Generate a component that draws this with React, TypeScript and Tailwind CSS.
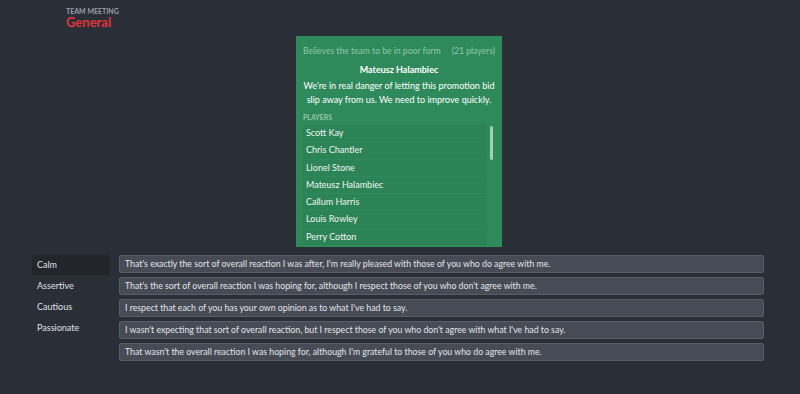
import React from 'react';

const players = [
    'Scott Kay',
    'Chris Chantler',
    'Lionel Stone',
    'Mateusz Halambiec',
    'Callum Harris',
    'Louis Rowley',
    'Perry Cotton',
];

const tones = ['Calm', 'Assertive', 'Cautious', 'Passionate'];

const replies = [
    "That's exactly the sort of overall reaction I was after, I'm really pleased with those of you who do agree with me.",
    "That's the sort of overall reaction I was hoping for, although I respect those of you who don't agree with me.",
    'I respect that each of you has your own opinion as to what I\'ve had to say.',
    "I wasn't expecting that sort of overall reaction, but I respect those of you who don't agree with what I've had to say.",
    "That wasn't the overall reaction I was hoping for, although I'm grateful to those of you who do agree with me.",
];

export default function App() {
    return (
        <div
            className="w-[800px] h-[394px] bg-[#2a2e36] overflow-hidden flex flex-col"
            style={{ fontFamily: 'Lato, "Noto Sans", sans-serif' }}
        >
            {/* 헤더 */}
            <div className="pl-[66px] pt-[7px] h-[36px]">
                <div className="text-[7px] font-bold uppercase text-[#9a9ea6] leading-[8px]">
                    Team Meeting
                </div>
                <div className="text-[13px] font-bold text-[#e0343d] leading-[15px]">General</div>
            </div>

            {/* 선수 반응 패널 */}
            <div className="flex justify-center">
                <div className="w-[206px] h-[211px] bg-[#2e8a5b] ml-[-2px] px-[6px] pt-[9px] flex flex-col overflow-hidden">
                    <div className="flex justify-between text-[8.6px] text-[#92c8a9] leading-[12px] px-[1px] whitespace-nowrap">
                        <span>Believes the team to be in poor form</span>
                        <span>(21 players)</span>
                    </div>
                    <div className="text-center text-[9px] font-bold text-white leading-[12px] mt-[7px]">
                        Mateusz Halambiec
                    </div>
                    <div className="text-center text-[9px] text-white leading-[14px] mt-[3px] whitespace-nowrap">
                        We're in real danger of letting this promotion bid
                        <br />
                        slip away from us. We need to improve quickly.
                    </div>
                    <div className="text-[7px] font-bold uppercase text-[#92c8a9] leading-[8px] mt-[6px] px-[1px]">
                        Players
                    </div>
                    <div className="flex mt-[4px] gap-[3px]">
                        <div className="flex-1 flex flex-col gap-[1px]">
                            {players.map((p) => (
                                <div
                                    key={p}
                                    className="h-[16.3px] bg-[#2c8356] text-[9px] text-[#eef6f1] leading-[16px] pl-[4px] whitespace-nowrap"
                                >
                                    {p}
                                </div>
                            ))}
                        </div>
                        <div className="w-[6px] flex flex-col pr-[3px]">
                            <div className="h-[34px] w-[3px] rounded-full bg-[#9fcfb4] mt-[1px]" />
                        </div>
                    </div>
                </div>
            </div>

            {/* 답변 선택 */}
            <div className="flex mt-[8px] px-[32px] gap-[9px]">
                <div className="w-[78px] flex flex-col gap-[1px]">
                    {tones.map((t, i) => (
                        <div
                            key={t}
                            className={`h-[20px] pl-[5px] text-[9px] leading-[20px] text-[#dfe1e4] rounded-[1px] ${
                                i === 0 ? 'bg-[#22252b]' : ''
                            }`}
                        >
                            {t}
                        </div>
                    ))}
                </div>
                <div className="flex-1 flex flex-col gap-[4px] mr-[4px]">
                    {replies.map((r) => (
                        <div
                            key={r}
                            className="h-[18px] bg-[#464b55] border border-[#585d67] rounded-[2px] px-[5px] text-[8.75px] leading-[16px] text-[#e3e5e8] whitespace-nowrap"
                        >
                            {r}
                        </div>
                    ))}
                </div>
            </div>
        </div>
    );
}
